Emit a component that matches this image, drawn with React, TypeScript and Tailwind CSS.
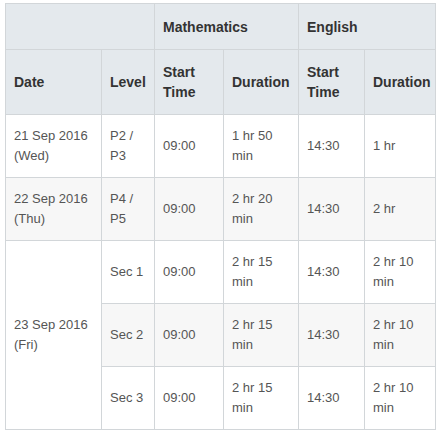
interface ExamRow {
  level: string;
  mathStart: string;
  mathDuration: string;
  engStart: string;
  engDuration: string;
}

interface ExamDay {
  date: string;
  day: string;
  rows: ExamRow[];
}

const schedule: ExamDay[] = [
  {
    date: '21 Sep 2016',
    day: '(Wed)',
    rows: [{ level: 'P2 / P3', mathStart: '09:00', mathDuration: '1 hr 50 min', engStart: '14:30', engDuration: '1 hr' }],
  },
  {
    date: '22 Sep 2016',
    day: '(Thu)',
    rows: [{ level: 'P4 / P5', mathStart: '09:00', mathDuration: '2 hr 20 min', engStart: '14:30', engDuration: '2 hr' }],
  },
  {
    date: '23 Sep 2016',
    day: '(Fri)',
    rows: [
      { level: 'Sec 1', mathStart: '09:00', mathDuration: '2 hr 15 min', engStart: '14:30', engDuration: '2 hr 10 min' },
      { level: 'Sec 2', mathStart: '09:00', mathDuration: '2 hr 15 min', engStart: '14:30', engDuration: '2 hr 10 min' },
      { level: 'Sec 3', mathStart: '09:00', mathDuration: '2 hr 15 min', engStart: '14:30', engDuration: '2 hr 10 min' },
    ],
  },
];

const th = 'border border-[#d2d6d9] px-2 text-left align-middle font-bold text-[14px] leading-5 text-[#333]';
const td = 'border border-[#d2d6d9] px-2 align-middle text-[13px] leading-5 text-[#555]';

export default function App() {
  let rowIndex = 0;

  return (
    <div className="min-h-screen bg-white pl-[5px] pt-[3px] font-['Liberation_Sans',Arial,sans-serif]">
      <table className="w-[430px] table-fixed border-collapse">
        <colgroup>
          <col className="w-[96px]" />
          <col className="w-[53px]" />
          <col className="w-[69px]" />
          <col className="w-[75px]" />
          <col className="w-[66px]" />
          <col className="w-[71px]" />
        </colgroup>
        <thead className="bg-[#e4e9ed]">
          <tr className="h-[46px]">
            <th colSpan={2} className={th}></th>
            <th colSpan={2} className={th}>Mathematics</th>
            <th colSpan={2} className={th}>English</th>
          </tr>
          <tr className="h-[65px]">
            <th className={th}>Date</th>
            <th className={th}>Level</th>
            <th className={th}>Start Time</th>
            <th className={th}>Duration</th>
            <th className={th}>Start Time</th>
            <th className={th}>Duration</th>
          </tr>
        </thead>
        <tbody>
          {schedule.map((day) =>
            day.rows.map((row, i) => {
              rowIndex += 1;
              const striped = rowIndex % 2 === 0;
              return (
                <tr key={day.date + row.level} className={`h-[63px] ${striped ? 'bg-[#f7f7f7]' : 'bg-white'}`}>
                  {i === 0 && (
                    <td rowSpan={day.rows.length} className={`${td} bg-white ${striped ? '!bg-[#f7f7f7]' : ''}`}>
                      {day.date}
                      <br />
                      {day.day}
                    </td>
                  )}
                  <td className={td}>{row.level}</td>
                  <td className={td}>{row.mathStart}</td>
                  <td className={td}>{row.mathDuration}</td>
                  <td className={td}>{row.engStart}</td>
                  <td className={td}>{row.engDuration}</td>
                </tr>
              );
            })
          )}
        </tbody>
      </table>
    </div>
  );
}
